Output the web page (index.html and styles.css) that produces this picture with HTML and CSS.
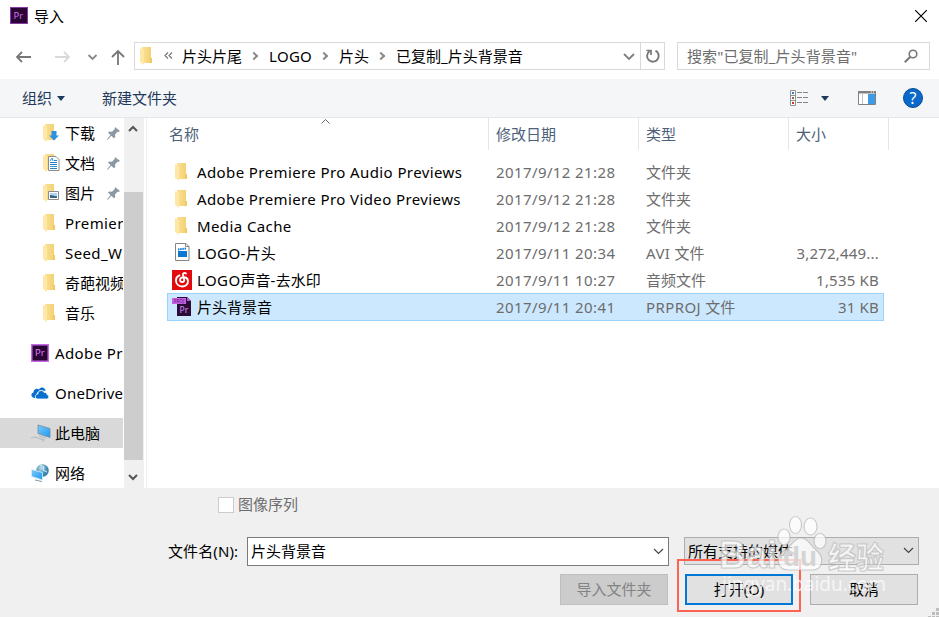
FILE: index.html
```html
<!DOCTYPE html>
<html lang="zh-CN">
<head>
  <meta charset="UTF-8">
  <meta name="viewport" content="width=device-width, initial-scale=1">
  <title>导入</title>
  <link rel="stylesheet" href="styles.css">
</head>
<body>
  <!-- Ícones reutilizados -->
  <svg class="defs" width="0" height="0">
    <defs>
      <linearGradient id="folderFill" x1="0" x2="1"><stop offset="0" stop-color="#fbe29a"/><stop offset="1" stop-color="#f3cf6d"/></linearGradient>
      <linearGradient id="screenFill" x1="0" x2="1" y2="1"><stop offset="0" stop-color="#7cc8fa"/><stop offset="1" stop-color="#1f9bf0"/></linearGradient>
      <radialGradient id="globeFill" cx=".4" cy=".3"><stop offset="0" stop-color="#bfe0ee"/><stop offset="1" stop-color="#3c86ae"/></radialGradient>
    </defs>
    <symbol id="folder" viewBox="0 0 12 18">
      <path d="M2 0h9v12h1v4H2z" fill="url(#folderFill)"/>
      <path d="M0 1l4 2v15l-4-3z" fill="#ffe8a6"/>
      <path d="M10 11h2v5h-2z" fill="#f0c864"/>
    </symbol>
    <symbol id="pin" viewBox="0 0 13 13">
      <path d="M8 0l5 4-1.500 1-1-.2-2.500 2.700.3 2.500-1.300 1.300-2.700-2.600L1 12.500l-1 .5.500-1.200 3-3.700L1 5.600l1.300-1 2.700.2L7.700 2z" fill="#8b99a5"/>
    </symbol>
  </svg>

  <div class="dialog">
    <div class="titlebar">
      <svg class="app-icon" width="18" height="18" viewBox="0 0 18 18"><rect x=".5" y=".5" width="17" height="16" fill="#2a0634" stroke="#8a3aa4"/><text x="3.500" y="11.500" font-size="9.500" fill="#d070ee">Pr</text></svg>
      <span class="title">导入</span>
      <svg class="close" width="12" height="12" viewBox="0 0 12 12"><path d="M0 0l12 12M12 0L0 12" stroke="#000" stroke-width="1.200"/></svg>
    </div>

    <div class="navbar">
      <div class="nav-buttons">
        <svg width="110" height="28" viewBox="0 0 110 28" fill="none" stroke-width="1.800">
          <path d="M23 15H9M14 10l-5 5 5 5" stroke="#777"/>
          <path d="M47 15h14M56 10l5 5-5 5" stroke="#d9d9d9"/>
          <path d="M80.500 13l4 4 4-4" stroke="#8a8a8a"/>
          <path d="M110 23V10M104 15l6-6 6 6" stroke="#777"/>
        </svg>
      </div>
      <div class="address">
        <svg class="crumb-folder" width="12" height="18"><use href="#folder"/></svg>
        <svg class="more" width="9" height="7" viewBox="0 0 9 7"><path d="M4 .5l-3 3 3 3M8 .5l-3 3 3 3" fill="none" stroke="#777" stroke-width="1.200"/></svg>
        <span>片头片尾</span>
        <i class="sep"></i>
        <span class="crumb-latin">LOGO</span>
        <i class="sep"></i>
        <span>片头</span>
        <i class="sep"></i>
        <span>已复制_片头背景音</span>
        <svg class="drop" width="12" height="8" viewBox="0 0 12 8"><path d="M1 1l5 5 5-5" fill="none" stroke="#808080" stroke-width="1.900"/></svg>
        <div class="refresh">
          <svg width="16" height="16" viewBox="0 0 16 16"><path d="M10.500 2.700A5.800 5.800 0 1 1 4.600 3.100" fill="none" stroke="#777" stroke-width="1.900"/><path d="M1.500 2.500h4.500V7" fill="none" stroke="#777" stroke-width="1.700"/></svg>
        </div>
      </div>
      <div class="search">
        <span>搜索"已复制_片头背景音"</span>
        <svg width="14" height="14" viewBox="0 0 14 14"><circle cx="9" cy="5" r="3.800" fill="none" stroke="#777" stroke-width="1.600"/><path d="M6.300 7.700L.8 13.200" stroke="#777" stroke-width="2"/></svg>
      </div>
    </div>

    <div class="toolbar">
      <span>组织</span>
      <i class="caret"></i>
      <span class="new-folder">新建文件夹</span>
      <div class="tools">
        <svg width="18" height="16" viewBox="0 0 18 16">
          <path d="M.5.5h5v15h-5zM.5 5.500h5M.5 10.500h5" fill="#fff" stroke="#929292"/>
          <path d="M2 2h2v2H2z" fill="#2f7fc4"/><path d="M2 7h2v2H2z" fill="#8c6f45"/><path d="M2 12h2v2H2z" fill="#d3341f"/>
          <path d="M7 2.500h11M7 7.500h11M7 12.500h11" stroke="#858585" stroke-dasharray="5 1"/>
        </svg>
        <i class="caret"></i>
        <svg class="pane-icon" width="18" height="14" viewBox="0 0 18 14">
          <path d="M.5.5h17v13H.5z" fill="#fff" stroke="#808080"/><path d="M0 0h18v2.500H0z" fill="#808080"/>
          <path d="M4.500 2v11" stroke="#c5c5c5"/><path d="M10 3h7v10h-7z" fill="#3c9be6"/><path d="M13 1h1M15 1h1" stroke="#fff"/>
        </svg>
        <svg class="help" width="20" height="20" viewBox="0 0 20 20"><circle cx="10" cy="10" r="9.500" fill="#0a69cb" stroke="#084a91"/><text x="10" y="15.500" text-anchor="middle" font-size="16" fill="#fff">?</text></svg>
      </div>
    </div>

    <div class="main">
      <div class="sidebar">
        <div class="tree">
          <div class="node sub">
            <svg width="20" height="18" viewBox="0 0 20 18"><use href="#folder" width="12" height="18"/><path d="M8.500 7h5v4.500H16l-5 5-5-5h2.500z" fill="#2f8fe0"/></svg>
            <span>下载</span><svg class="pin" width="13" height="13"><use href="#pin"/></svg>
          </div>
          <div class="node sub">
            <svg width="20" height="18" viewBox="0 0 20 18"><use href="#folder" width="12" height="18"/><path d="M5.500 2.500h7.500l3 3v11H5.500z" fill="#fff" stroke="#8c8c8c"/><path d="M7 8.500h7M7 10.500h7M7 14.500h7M11 6.500h3" stroke="#2c80c4"/><path d="M7 7l2-3 1 3M7 12.500h7" fill="none" stroke="#2c9ce0"/></svg>
            <span>文档</span><svg class="pin" width="13" height="13"><use href="#pin"/></svg>
          </div>
          <div class="node sub">
            <svg width="20" height="18" viewBox="0 0 20 18"><use href="#folder" width="12" height="18"/><path d="M5.500 7.500h10v8h-10z" fill="#fff" stroke="#8c8c8c"/><path d="M7 9h7v5H7z" fill="#a9d2f4"/><path d="M7 11l3 .5 4 1V14H7z" fill="#37647c"/></svg>
            <span>图片</span><svg class="pin" width="13" height="13"><use href="#pin"/></svg>
          </div>
          <div class="node sub"><svg width="20" height="18"><use href="#folder" width="12" height="18"/></svg><span class="latin">Premiere</span></div>
          <div class="node sub"><svg width="20" height="18"><use href="#folder" width="12" height="18"/></svg><span class="latin">Seed_W</span></div>
          <div class="node sub"><svg width="20" height="18"><use href="#folder" width="12" height="18"/></svg><span>奇葩视频</span></div>
          <div class="node sub"><svg width="20" height="18"><use href="#folder" width="12" height="18"/></svg><span>音乐</span></div>
          <div class="node root"><svg width="18" height="18" viewBox="0 0 18 18"><rect x=".75" y=".75" width="16.500" height="16.500" fill="#2a0634" stroke="#c768e6" stroke-width="1.500"/><text x="4" y="12" font-size="9.500" fill="#e07cff">Pr</text></svg><span class="latin">Adobe Pr</span></div>
          <div class="node root"><svg width="18" height="18" viewBox="0 0 18 18"><path d="M4 14C0 14-1 9.500 2.500 8.500 2.500 5 6 4 8 5.500 10 2 14.500 3.500 14.500 7L9 6 6 9z" fill="#0a70cf"/><path d="M7 15c-3.500 0-3.500-4.500-.2-5C7 6 12 5.500 13.200 8.500c2.500-.5 3 1.500 2.800 2.200 2.500.3 2.500 4.300-.5 4.300z" fill="#0a70cf" stroke="#fff" stroke-width=".8"/></svg><span class="onedrive">OneDrive</span></div>
          <div class="node root current"><svg width="20" height="18" viewBox="0 0 20 18"><path d="M7 1l12 3.500v9L7 9.500z" fill="url(#screenFill)" stroke="#6e8ba0" stroke-width=".8"/><path d="M0 14l4-1 9 3-2 1.500M8 12l7 2" fill="none" stroke="#b3bcc2" stroke-width="1.200"/></svg><span>此电脑</span></div>
          <div class="node root"><svg width="18" height="18" viewBox="0 0 18 18"><circle cx="11.500" cy="6.500" r="6.300" fill="url(#globeFill)"/><path d="M9 1l4 2-1 3 4 2" fill="none" stroke="#d8eef5"/><path d="M.5 5.500l11 3v7.500l-11-3.500z" fill="url(#screenFill)" stroke="#d9edf7" stroke-width=".8"/><path d="M4 16l7 1.500" stroke="#8498a4"/></svg><span>网络</span></div>
        </div>
        <div class="scrollbar">
          <svg class="arrow-up" width="10" height="7" viewBox="0 0 10 7"><path d="M1 6l4-4 4 4" fill="none" stroke="#555" stroke-width="2"/></svg>
          <div class="thumb"></div>
          <svg class="arrow-down" width="10" height="7" viewBox="0 0 10 7"><path d="M1 1l4 4 4-4" fill="none" stroke="#555" stroke-width="2"/></svg>
        </div>
      </div>

      <div class="files">
        <div class="row head">
          <span class="name">名称<svg class="sort" width="9" height="5" viewBox="0 0 9 5"><path d="M.5 4.500l4-4 4 4" fill="none" stroke="#666"/></svg></span>
          <span class="date">修改日期</span>
          <span class="type">类型</span>
          <span class="size">大小</span>
        </div>
        <div class="row">
          <span class="name"><svg width="20" height="20"><use href="#folder" x="3" y="1" width="12" height="18"/></svg><span class="latin">Adobe Premiere Pro Audio Previews</span></span>
          <span class="date">2017/9/12 21:28</span><span class="type">文件夹</span><span class="size"></span>
        </div>
        <div class="row">
          <span class="name"><svg width="20" height="20"><use href="#folder" x="3" y="1" width="12" height="18"/></svg><span class="latin">Adobe Premiere Pro Video Previews</span></span>
          <span class="date">2017/9/12 21:28</span><span class="type">文件夹</span><span class="size"></span>
        </div>
        <div class="row">
          <span class="name"><svg width="20" height="20"><use href="#folder" x="3" y="1" width="12" height="18"/></svg><span class="latin">Media Cache</span></span>
          <span class="date">2017/9/12 21:28</span><span class="type">文件夹</span><span class="size"></span>
        </div>
        <div class="row">
          <span class="name"><svg width="20" height="20" viewBox="0 0 20 20"><path d="M3.500.5H14l3 3v14H3.500z" fill="#fff" stroke="#858585"/><path d="M13.500.5v3H17" fill="none" stroke="#858585"/><path d="M6 8h9v6H6z" fill="#0d78d2"/><path d="M6 6.500l8-1" stroke="#0d78d2" stroke-width="2" stroke-dasharray="1.500 .7"/></svg><span><span class="latin">LOGO-</span>片头</span></span>
          <span class="date">2017/9/11 20:34</span><span class="type"><span class="latin">AVI </span>文件</span><span class="size">3,272,449...</span>
        </div>
        <div class="row">
          <span class="name"><svg width="20" height="20" viewBox="0 0 20 20"><path d="M0 0h20v20H0z" fill="#e20a10"/><path d="M14 3.500c-1.500-1-3.300-.5-3 1.200l1.200 5c.5 3-4.200 3-4.200.2 0-3.500 7.500-4 8 1 .3 7.500-12 7.500-12-.5 0-2.700 1.500-4.300 3.500-5" fill="none" stroke="#fff" stroke-width="1.900" stroke-linecap="round"/></svg><span><span class="latin">LOGO</span>声音<span class="latin">-</span>去水印</span></span>
          <span class="date">2017/9/11 10:27</span><span class="type">音频文件</span><span class="size">1,535 KB</span>
        </div>
        <div class="row selected">
          <span class="name"><svg width="20" height="20" viewBox="0 0 20 20"><path d="M5 0h10l4 4v15H5z" fill="#2a0c36"/><path d="M15 0v4h4z" fill="#b45ad2"/><path d="M0 1h14v6H0z" fill="#c45fe6"/><text x="2" y="6" font-size="4.500" fill="#5a2070">PROJ</text><text x="7.500" y="16" font-size="8.500" fill="#e08cff">Pr</text></svg>片头背景音</span>
          <span class="date">2017/9/11 20:41</span><span class="type"><span class="latin">PRPROJ </span>文件</span><span class="size">31 KB</span>
        </div>
      </div>
    </div>

    <div class="footer">
      <div class="sequence"><i class="checkbox"></i><span>图像序列</span></div>
      <div class="filename">
        <label>文件名(N):</label>
        <div class="field"><span>片头背景音</span><svg width="11" height="7" viewBox="0 0 11 7"><path d="M1 1l4.500 4.500L10 1" fill="none" stroke="#444" stroke-width="1.200"/></svg></div>
        <div class="filter"><span>所有支持的媒体</span><svg width="11" height="7" viewBox="0 0 11 7"><path d="M1 1l4.500 4.500L10 1" fill="none" stroke="#444" stroke-width="1.200"/></svg></div>
      </div>
      <div class="actions">
        <div class="btn disabled">导入文件夹</div>
        <div class="btn primary">打开(O)</div>
        <div class="btn">取消</div>
      </div>
    </div>

    <div class="highlight"></div>
    <svg class="watermark" width="180" height="90" viewBox="0 0 180 90">
      <g class="wm-shape">
        <text class="wm-brand" x="0" y="58" textLength="58" lengthAdjust="spacingAndGlyphs">Bai</text>
        <ellipse cx="65" cy="27" rx="6" ry="8"/><ellipse cx="76.500" cy="15" rx="6" ry="8.500"/><ellipse cx="91.500" cy="16.500" rx="6.500" ry="8.500"/><ellipse cx="101" cy="31" rx="6" ry="7.500"/>
        <path d="M82 28c7 0 9 7 15 12 9 7 7 20-4 20H70c-12 0-14-12-5-19 8-5 10-13 17-13z"/>
        <text class="wm-cjk" x="109" y="58" textLength="56" lengthAdjust="spacingAndGlyphs">经验</text>
      </g>
      <text class="wm-du" x="64" y="56" textLength="34" lengthAdjust="spacingAndGlyphs">du</text>
      <text class="wm-url" x="3" y="81" textLength="164" lengthAdjust="spacingAndGlyphs">jingyan.baidu.com</text>
    </svg>
    <svg class="grip" width="12" height="12" viewBox="0 0 12 12"><path d="M8 0h3v3H8zM4 4h3v3H4zM8 4h3v3H8zM0 8h3v3H0zM4 8h3v3H4zM8 8h3v3H8z" fill="#bdbdbd"/></svg>
  </div>
</body>
</html>
```

FILE: styles.css
```css
* {
  box-sizing: border-box;
  margin: 0;
  padding: 0;
}

body {
  font-family: "Noto Sans", "Noto Sans CJK SC", sans-serif;
  font-size: 15px;
  line-height: 20px;
  color: #000;
  background: #fff;
  overflow: hidden;
}

svg {
  flex: none;
  display: block;
}

span {
  white-space: pre;
}

.latin {
  letter-spacing: 0.4px;
}

.defs {
  position: absolute;
}

.dialog {
  position: relative;
  width: 939px;
  height: 617px;
  display: flex;
  flex-direction: column;
  overflow: hidden;
}

/* Barra de título */
.titlebar {
  height: 33px;
  display: flex;
  align-items: center;
  padding: 0 12px 2px 10px;
}

.title {
  margin-left: 6px;
}

.close {
  margin-left: auto;
}

/* Navegação */
.navbar {
  height: 46px;
  display: flex;
  padding: 9px 9px 0 8px;
}

.nav-buttons {
  width: 126px;
}

.nav-buttons svg {
  overflow: visible;
}

.address {
  width: 531px;
  height: 28px;
  border: 1px solid #d9d9d9;
  display: flex;
  align-items: center;
  padding: 0 0 1px 5px;
}

.more {
  margin: 0 9px 0 12px;
}

.sep {
  width: 6px;
  height: 6px;
  border-top: 2px solid #8a8a8a;
  border-right: 2px solid #8a8a8a;
  transform: rotate(45deg);
  margin: 0 12px 0 9px;
}

.crumb-latin {
  width: 43px;
  letter-spacing: 0.3px;
}

.drop {
  margin: 3px 5px 0 auto;
}

.refresh {
  width: 24px;
  height: 26px;
  border-left: 1px solid #d9d9d9;
  display: flex;
  align-items: center;
  justify-content: center;
}

.search {
  flex: 1;
  height: 28px;
  margin-left: 12px;
  border: 1px solid #d9d9d9;
  display: flex;
  align-items: center;
  justify-content: space-between;
  padding: 0 11px 0 9px;
  color: #6d6d6d;
}

.search span {
  letter-spacing: 0.1px;
}

/* Barra de ferramentas */
.toolbar {
  height: 39px;
  display: flex;
  align-items: center;
  padding: 0 16px 0 22px;
  background: #f5f6f7;
  border-bottom: 1px solid #e5e8eb;
  color: #1e395b;
}

.caret {
  border: 4px solid transparent;
  border-top: 5px solid #1e395b;
  border-bottom: 0;
  margin-left: 5px;
}

.new-folder {
  margin-left: 37px;
}

.tools {
  margin-left: auto;
  display: flex;
  align-items: center;
}

.tools .caret {
  margin-left: 13px;
}

.pane-icon {
  margin: 0 27px 0 29px;
}

/* Área principal */
.main {
  height: 370px;
  display: flex;
}

.sidebar {
  width: 147px;
  display: flex;
  border-right: 1px solid #f0f0f0;
}

.tree {
  width: 124px;
  overflow: hidden;
}

.node {
  width: 123px;
  height: 30px;
  display: flex;
  align-items: center;
  overflow: hidden;
}

.sub {
  padding-left: 43px;
}

.sub span {
  margin-left: 2px;
}

.pin {
  margin-left: 12px;
}

.root {
  margin-top: 10px;
  padding-left: 31px;
}

.root span {
  margin-left: 6px;
}

.root.current span {
  margin-left: 4px;
}

.onedrive {
  letter-spacing: 0.2px;
}

.current {
  background: #d9d9d9;
}

.scrollbar {
  width: 20px;
  background: #f0f0f0;
  display: flex;
  flex-direction: column;
}

.arrow-up {
  margin: 7px 0 0 4px;
}

.thumb {
  width: 19px;
  height: 268px;
  margin-top: 60px;
  background: #cdcdcd;
}

.arrow-down {
  margin: 14px 0 0 4px;
}

/* Lista de arquivos */
.files {
  padding-left: 20px;
}

.row {
  width: 717px;
  height: 27px;
  display: flex;
  align-items: center;
  color: #6d6d6d;
}

.row .name {
  width: 321px;
  padding-left: 5px;
  display: flex;
  align-items: center;
  gap: 5px;
  color: #000;
}

.row .date {
  width: 150px;
  padding-left: 8px;
  letter-spacing: 0.4px;
}

.row .type {
  width: 150px;
  padding-left: 8px;
}

.row .size {
  width: 91px;
  text-align: right;
  letter-spacing: 0.2px;
}

.head {
  width: 722px;
  height: 32px;
  margin-bottom: 8px;
}

.head span,
.head .name {
  height: 32px;
  line-height: 32px;
  border-right: 1px solid #e5e5e5;
  color: #4c607a;
}

.head .name {
  width: 322px;
  padding-left: 2px;
}

.row.head .date,
.row.head .type,
.row.head .size {
  padding-left: 7px;
  letter-spacing: 0;
}

.row.head .size {
  width: 100px;
  text-align: left;
}

.sort {
  margin: -25px 0 0 117px;
}

.selected {
  height: 28px;
  background: #cce8ff;
  outline: 1px solid #99d1ff;
  outline-offset: -1px;
}

/* Rodapé */
.footer {
  flex: 1;
  background: #f0f0f0;
}

.sequence {
  display: flex;
  align-items: center;
  height: 34px;
  padding-left: 218px;
  gap: 4px;
  color: #6d6d6d;
}

.sequence span {
  padding-bottom: 3px;
}

.checkbox {
  width: 16px;
  height: 16px;
  background: #fff;
  border: 1px solid #ccc;
}

.filename {
  display: flex;
  align-items: center;
  height: 29px;
  margin-top: 15px;
  padding-left: 168px;
}

.filename label {
  width: 79px;
  padding-bottom: 2px;
  white-space: nowrap;
  letter-spacing: 0.1px;
}

.field,
.filter {
  display: flex;
  align-items: center;
  justify-content: space-between;
  height: 29px;
  padding: 0 4px 1px 4px;
}

.field {
  width: 422px;
  border: 1px solid #7a7a7a;
  background: #fff;
  padding-left: 3px;
}

.filter {
  width: 235px;
  height: 28px;
  margin: -1px 0 0 15px;
  border: 1px solid #adadad;
  background: #e1e1e1;
  padding-left: 3px;
}

.actions {
  display: flex;
  gap: 17px;
  margin-top: 8px;
  padding-left: 560px;
}

.btn {
  width: 108px;
  height: 31px;
  border: 1px solid #adadad;
  background: #e1e1e1;
  text-align: center;
  line-height: 29px;
}

.primary {
  border: 2px solid #0078d7;
  line-height: 27px;
}

.disabled {
  background: #ccc;
  border-color: #bfbfbf;
  color: #838383;
}

/* Sobreposições */
.highlight {
  position: absolute;
  left: 677px;
  top: 559px;
  width: 124px;
  height: 53px;
  border: 2px solid #ff6250;
}

.watermark {
  position: absolute;
  left: 719px;
  top: 510px;
}

.wm-shape {
  fill: rgba(255, 255, 255, 0.7);
  stroke: rgba(175, 175, 175, 0.6);
  stroke-width: 1.2;
}

.wm-brand,
.wm-du {
  font: bold 38px "Liberation Sans", sans-serif;
}

.wm-du {
  font-size: 27px;
  fill: #d4d4d4;
}

.wm-cjk {
  font: bold 30px "Noto Sans CJK SC", sans-serif;
}

.wm-url {
  font: 19px "Noto Sans", sans-serif;
  fill: rgba(255, 255, 255, 0.72);
}

.grip {
  position: absolute;
  right: -1px;
  bottom: -3px;
}
```
